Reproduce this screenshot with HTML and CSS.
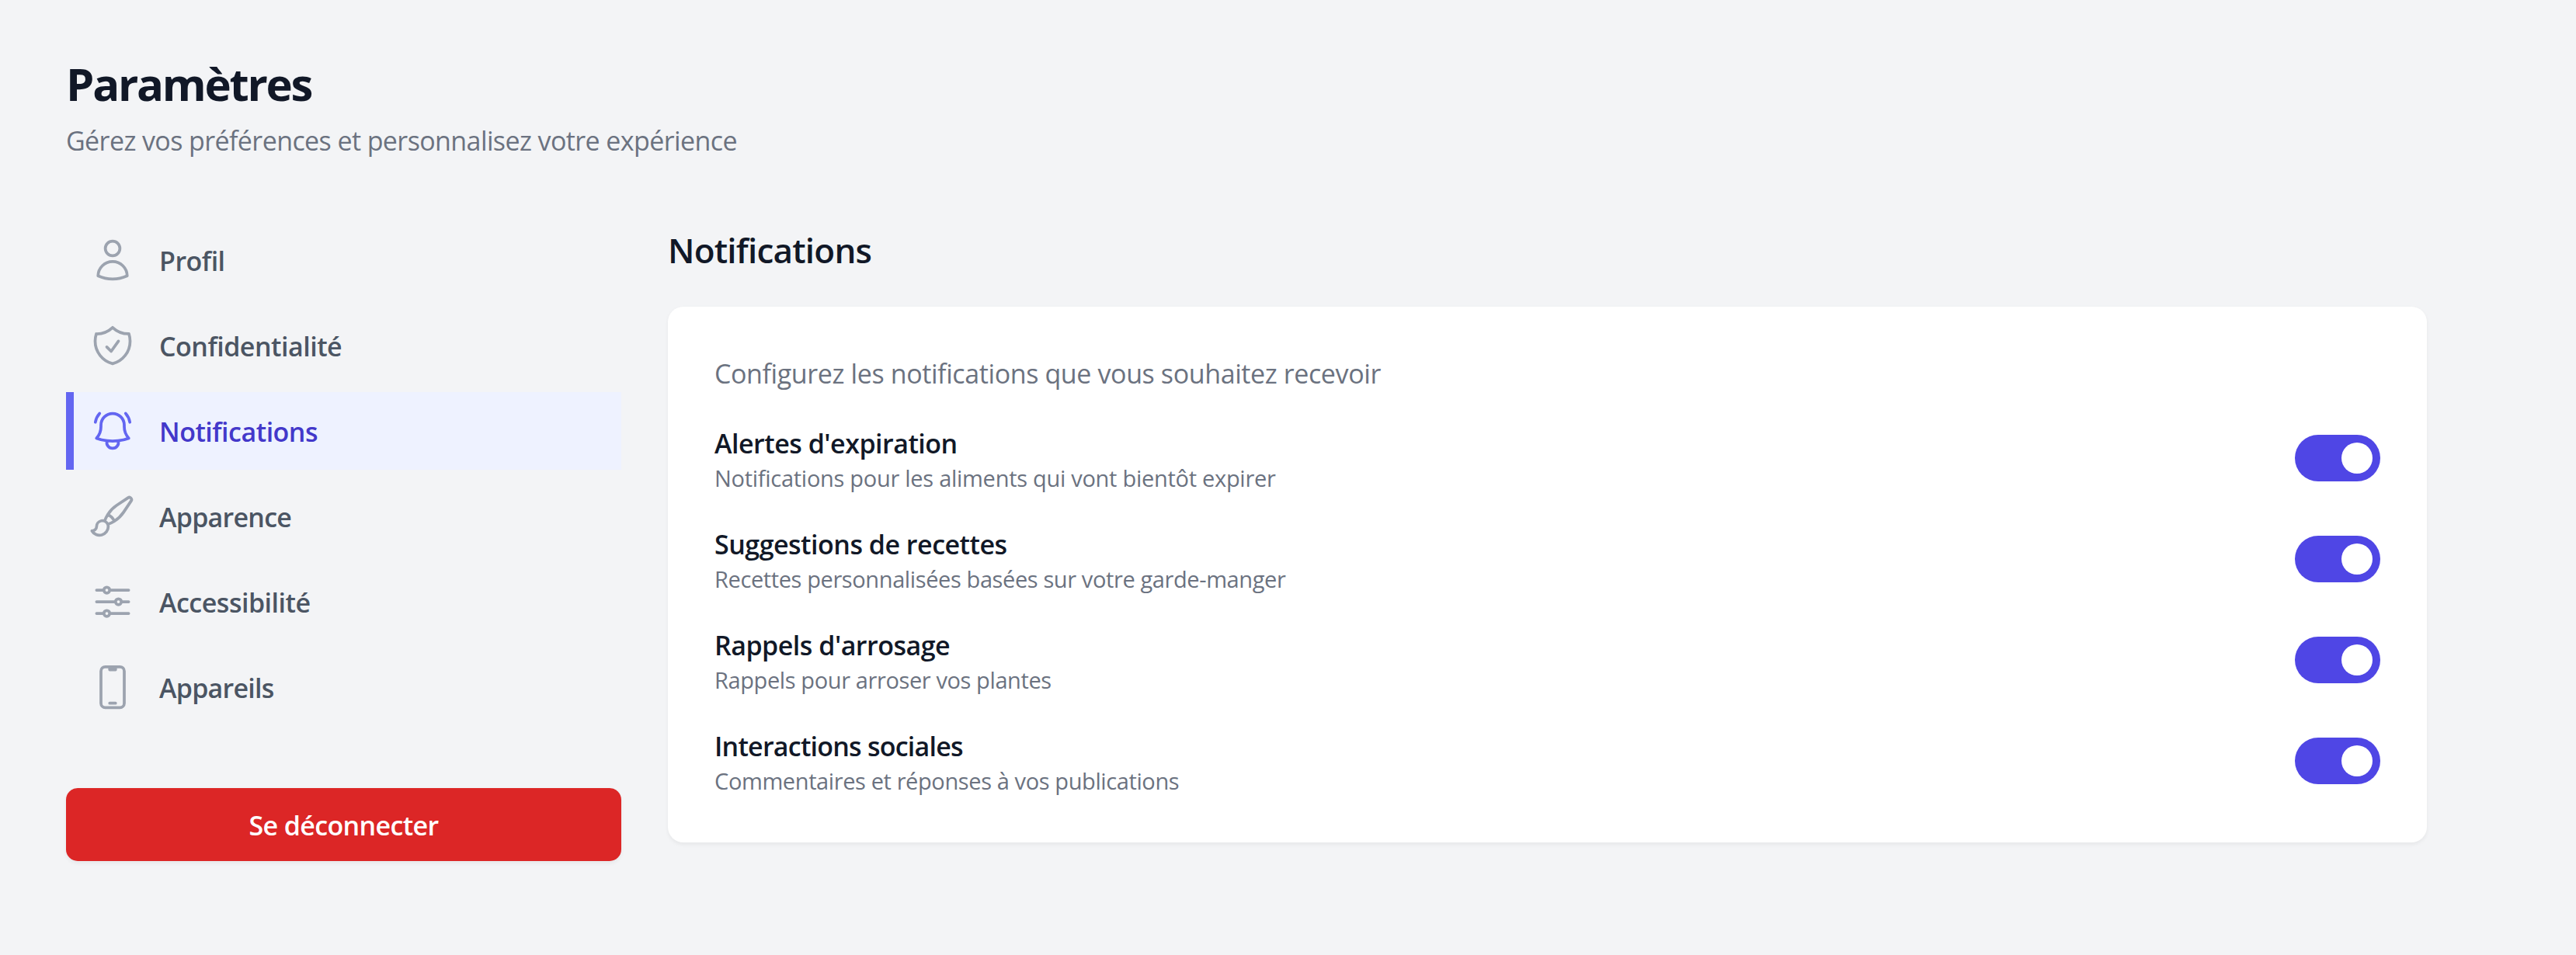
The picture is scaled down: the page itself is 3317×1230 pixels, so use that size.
FILE: index.html
```html
<!DOCTYPE html>
<html lang="fr">
<head>
<meta charset="utf-8">
<title>Paramètres</title>
<link rel="stylesheet" href="styles.css">
</head>
<body>
<div class="page">
  <header class="page-header">
    <h1 class="page-title">Paramètres</h1>
    <p class="page-subtitle">Gérez vos préférences et personnalisez votre expérience</p>
  </header>
  <div class="layout">
    <aside class="sidebar">
      <nav class="nav">
        <a class="nav-item">
          <svg class="icon" viewBox="0 0 24 24"><path d="M15.75 6a3.75 3.75 0 1 1-7.5 0 3.75 3.75 0 0 1 7.5 0ZM4.501 20.118a7.5 7.5 0 0 1 14.998 0A17.933 17.933 0 0 1 12 21.75c-2.676 0-5.216-.584-7.499-1.632Z"/></svg>
          <span class="nav-label">Profil</span>
        </a>
        <a class="nav-item">
          <svg class="icon" viewBox="0 0 24 24"><path d="M9 12.75 11.25 15 15 9.75m-3-7.036A11.959 11.959 0 0 1 3.598 6 11.99 11.99 0 0 0 3 9.749c0 5.592 3.824 10.29 9 11.623 5.176-1.332 9-6.03 9-11.622 0-1.31-.21-2.571-.598-3.751h-.152c-3.196 0-6.1-1.248-8.25-3.285Z"/></svg>
          <span class="nav-label">Confidentialité</span>
        </a>
        <a class="nav-item nav-item-active">
          <svg class="icon" viewBox="0 0 24 24"><path d="M14.857 17.082a23.848 23.848 0 0 0 5.454-1.31A8.967 8.967 0 0 1 18 9.75V9A6 6 0 0 0 6 9v.75a8.967 8.967 0 0 1-2.312 6.022c1.733.64 3.56 1.085 5.455 1.31m5.714 0a24.255 24.255 0 0 1-5.714 0m5.714 0a3 3 0 1 1-5.714 0M3.124 7.5A8.969 8.969 0 0 1 5.292 3m13.416 0a8.969 8.969 0 0 1 2.168 4.5"/></svg>
          <span class="nav-label">Notifications</span>
        </a>
        <a class="nav-item">
          <svg class="icon" viewBox="0 0 24 24"><path d="M9.53 16.122a3 3 0 0 0-5.78 1.128 2.25 2.25 0 0 1-2.4 2.245 4.5 4.5 0 0 0 8.4-2.245c0-.399-.078-.78-.22-1.128Zm0 0a15.998 15.998 0 0 0 3.388-1.62m-5.043-.025a15.994 15.994 0 0 1 1.622-3.395m3.42 3.42a15.995 15.995 0 0 0 4.764-4.648l3.876-5.814a1.151 1.151 0 0 0-1.597-1.597L14.146 6.32a15.996 15.996 0 0 0-4.649 4.763m3.42 3.42a6.776 6.776 0 0 0-3.42-3.42"/></svg>
          <span class="nav-label nav-label-tight">Apparence</span>
        </a>
        <a class="nav-item">
          <svg class="icon" viewBox="0 0 24 24"><path d="M10.5 6h9.75M10.5 6a1.5 1.5 0 1 1-3 0m3 0a1.5 1.5 0 1 0-3 0M3.75 6H7.5m3 12h9.75m-9.75 0a1.5 1.5 0 0 1-3 0m3 0a1.5 1.5 0 0 0-3 0m-3.75 0H7.5m9-6h3.75m-3.75 0a1.5 1.5 0 0 1-3 0m3 0a1.5 1.5 0 0 0-3 0m-9.75 0h9.75"/></svg>
          <span class="nav-label">Accessibilité</span>
        </a>
        <a class="nav-item">
          <svg class="icon" viewBox="0 0 24 24"><path d="M10.5 1.5H8.25A2.25 2.25 0 0 0 6 3.75v16.5a2.25 2.25 0 0 0 2.25 2.25h7.5A2.25 2.25 0 0 0 18 20.25V3.75a2.25 2.25 0 0 0-2.25-2.25H13.5m-3 0V3h3V1.5m-3 0h3m-3 18.75h3"/></svg>
          <span class="nav-label nav-label-tight">Appareils</span>
        </a>
      </nav>
      <button class="logout" type="button">Se déconnecter</button>
    </aside>
    <main class="content">
      <h2 class="section-title">Notifications</h2>
      <section class="card">
        <p class="card-intro">Configurez les notifications que vous souhaitez recevoir</p>
        <div class="settings">
          <div class="setting">
            <div>
              <h3 class="setting-title">Alertes d'expiration</h3>
              <p class="setting-text setting-text-wide">Notifications pour les aliments qui vont bientôt expirer</p>
            </div>
            <span class="toggle"><span class="toggle-knob"></span></span>
          </div>
          <div class="setting">
            <div>
              <h3 class="setting-title">Suggestions de recettes</h3>
              <p class="setting-text">Recettes personnalisées basées sur votre garde-manger</p>
            </div>
            <span class="toggle"><span class="toggle-knob"></span></span>
          </div>
          <div class="setting">
            <div>
              <h3 class="setting-title">Rappels d'arrosage</h3>
              <p class="setting-text">Rappels pour arroser vos plantes</p>
            </div>
            <span class="toggle"><span class="toggle-knob"></span></span>
          </div>
          <div class="setting">
            <div>
              <h3 class="setting-title setting-title-tight">Interactions sociales</h3>
              <p class="setting-text">Commentaires et réponses à vos publications</p>
            </div>
            <span class="toggle"><span class="toggle-knob"></span></span>
          </div>
        </div>
      </section>
    </main>
  </div>
</div>
</body>
</html>
```
FILE: styles.css
```css
* {
  box-sizing: border-box;
  margin: 0;
  padding: 0;
}

body {
  min-height: 100vh;
  background: #f3f4f6;
  color: #111827;
  font-family: "Open Sans", "Noto Sans", sans-serif;
}

.page {
  padding: 65px 192px 0 85px;
}

.page-header {
  margin-bottom: 80px;
}

.page-title {
  height: 80px;
  padding-top: 5px;
  font-size: 58px;
  font-weight: 700;
  line-height: 76px;
  letter-spacing: -2.25px;
}

.page-subtitle {
  height: 50px;
  margin-top: 10px;
  padding-top: 2px;
  color: #6b7280;
  font-size: 34px;
  line-height: 48px;
  letter-spacing: -0.6px;
}

.layout {
  display: grid;
  grid-template-columns: 715px 1fr;
  column-gap: 60px;
  align-items: start;
}

.nav {
  display: flex;
  flex-direction: column;
  gap: 10px;
}

.nav-item {
  display: flex;
  align-items: center;
  gap: 30px;
  height: 100px;
  padding-left: 20px;
  border-left: 10px solid transparent;
  color: #4b5563;
}

.nav-item-active {
  border-left-color: #6366f1;
  background: #eef2ff;
  color: #4338ca;
}

.icon {
  width: 60px;
  height: 60px;
  fill: none;
  stroke: #9ca3af;
  stroke-width: 1.5;
  stroke-linecap: round;
  stroke-linejoin: round;
}

.nav-item-active .icon {
  stroke: #6366f1;
}

.nav-label {
  padding-top: 2px;
  font-size: 34px;
  font-weight: 600;
  line-height: 48px;
  letter-spacing: -0.5px;
}

.nav-label-tight {
  letter-spacing: -0.75px;
}

.logout {
  display: block;
  width: 100%;
  height: 94px;
  margin-top: 80px;
  padding-top: 2px;
  border: 0;
  border-radius: 15px;
  background: #dc2626;
  box-shadow: 0 2.5px 5px rgba(0, 0, 0, 0.05);
  color: #fff;
  font-family: inherit;
  font-size: 34px;
  font-weight: 600;
  line-height: 48px;
  letter-spacing: -0.62px;
}

.section-title {
  height: 70px;
  padding-top: 4px;
  font-size: 44px;
  font-weight: 600;
  line-height: 67px;
  letter-spacing: -0.79px;
}

.card {
  margin-top: 40px;
  padding: 60px;
  border-radius: 20px;
  background: #fff;
  box-shadow: 0 2.5px 5px rgba(0, 0, 0, 0.05);
}

.card-intro {
  height: 50px;
  padding-top: 2px;
  color: #6b7280;
  font-size: 34px;
  line-height: 48px;
  letter-spacing: -0.39px;
}

.settings {
  display: flex;
  flex-direction: column;
  gap: 40px;
  margin-top: 40px;
}

.setting {
  display: flex;
  align-items: center;
  justify-content: space-between;
}

.setting-title {
  height: 50px;
  padding-top: 2px;
  font-size: 34px;
  font-weight: 600;
  line-height: 48px;
  letter-spacing: -0.5px;
}

.setting-title-tight {
  letter-spacing: -0.77px;
}

.setting-text {
  height: 40px;
  padding-top: 2px;
  color: #6b7280;
  font-size: 29px;
  line-height: 38px;
  letter-spacing: -0.39px;
}

.setting-text-wide {
  letter-spacing: -0.28px;
}

.toggle {
  display: flex;
  justify-content: flex-end;
  width: 110px;
  height: 60px;
  padding: 10px;
  border-radius: 30px;
  background: #4f46e5;
}

.toggle-knob {
  width: 40px;
  height: 40px;
  border-radius: 50%;
  background: #fff;
}
```
